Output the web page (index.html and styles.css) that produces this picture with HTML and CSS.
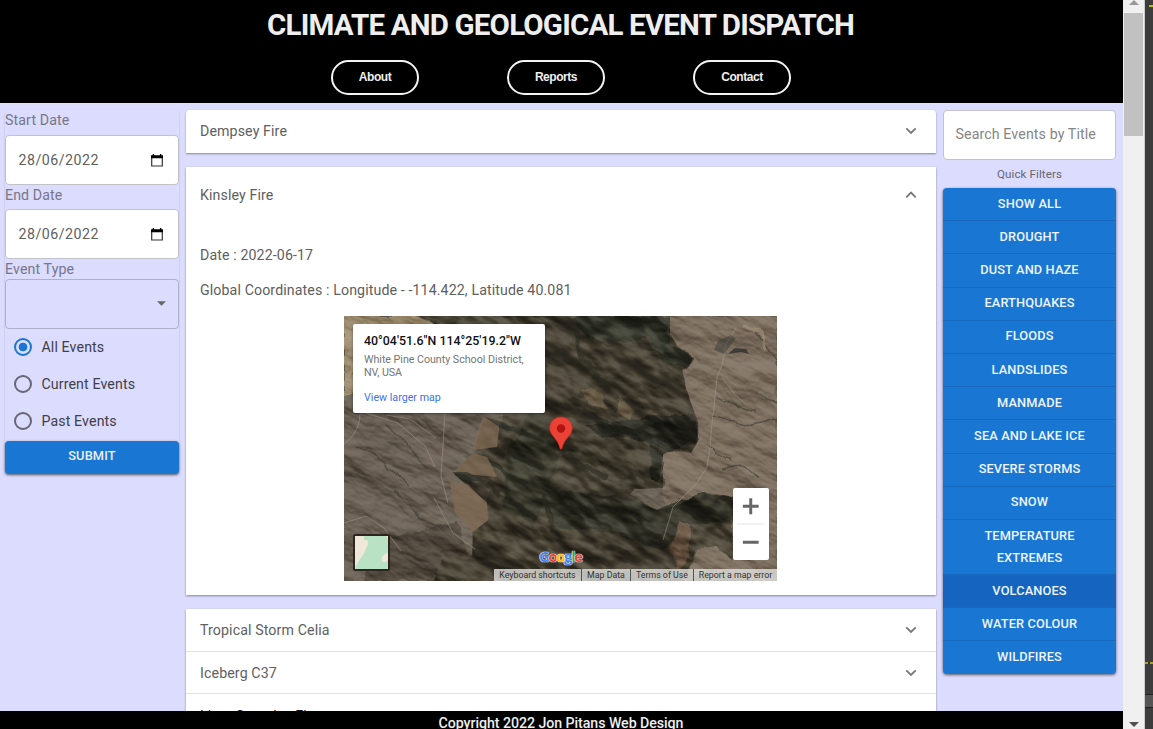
FILE: index.html
```html
<!DOCTYPE html>
<html lang="en">
<head>
<meta charset="utf-8">
<title>Climate and Geological Event Dispatch</title>
<link rel="stylesheet" href="styles.css">
</head>
<body>
<div class="screen">
  <div class="app">
    <header class="header">
      <h1 class="title">CLIMATE AND GEOLOGICAL EVENT DISPATCH</h1>
      <nav class="nav">
        <a class="nav-link">About</a>
        <a class="nav-link nav-reports">Reports</a>
        <a class="nav-link nav-contact">Contact</a>
      </nav>
    </header>
    <main class="main">
      <form class="search-form">
        <label class="label">Start Date</label>
        <div class="field date"><span>28/06/2022</span><svg class="calendar" viewBox="0 0 12 13"><path d="M.7 2.5h10.6v9.500H.7z" fill="none" stroke="#333" stroke-width="1.200"/><path d="M0 1.200h12v3H0zM1.700 0h1.400v2H1.700zM8.900 0h1.400v2H8.900z"/></svg></div>
        <label class="label">End Date</label>
        <div class="field date"><span>28/06/2022</span><svg class="calendar" viewBox="0 0 12 13"><path d="M.7 2.5h10.6v9.500H.7z" fill="none" stroke="#333" stroke-width="1.200"/><path d="M0 1.200h12v3H0zM1.700 0h1.400v2H1.700zM8.900 0h1.400v2H8.900z"/></svg></div>
        <label class="label label-type">Event Type</label>
        <div class="field select"><svg class="arrow" viewBox="0 0 8 4"><path d="M0 0h8L4 4z"/></svg></div>
        <div class="radio"><i class="dot checked"></i><span>All Events</span></div>
        <div class="radio"><i class="dot"></i><span>Current Events</span></div>
        <div class="radio"><i class="dot"></i><span>Past Events</span></div>
        <button type="button" class="submit">SUBMIT</button>
      </form>
      <section class="events">
        <article class="card first"><span>Dempsey Fire</span><svg class="chevron" viewBox="0 0 12 8"><path d="M1.3 1.3 6 6l4.700-4.700"/></svg></article>
        <article class="card open">
          <div class="open-head"><span>Kinsley Fire</span><svg class="chevron" viewBox="0 0 12 8"><path d="M1.300 6.300 6 1.600l4.700 4.700"/></svg></div>
          <p class="detail">Date : 2022-06-17</p>
          <p class="detail coords">Global Coordinates : Longitude - -114.422, Latitude 40.081</p>
          <div class="map">
            <svg class="terrain" viewBox="0 0 433 265">
              <defs>
                <filter id="plain" x="0" y="0" width="100%" height="100%" color-interpolation-filters="sRGB">
                  <feTurbulence type="fractalNoise" baseFrequency=".018 .04" numOctaves="5" seed="8"/>
                  <feDiffuseLighting lighting-color="#fff" surfaceScale="6" diffuseConstant=".62"><feDistantLight azimuth="240" elevation="52"/></feDiffuseLighting>
                </filter>
                <filter id="ridges" x="0" y="0" width="100%" height="100%" color-interpolation-filters="sRGB">
                  <feTurbulence type="fractalNoise" baseFrequency=".022 .038" numOctaves="3" seed="21"/>
                  <feDiffuseLighting lighting-color="#fff" surfaceScale="18" diffuseConstant=".7"><feDistantLight azimuth="250" elevation="46"/></feDiffuseLighting>
                  <feGaussianBlur stdDeviation=".8"/>
                </filter>
                <filter id="soft" x="-10%" y="-10%" width="120%" height="120%"><feTurbulence type="fractalNoise" baseFrequency=".06" numOctaves="3" seed="4"/><feDisplacementMap in="SourceGraphic" scale="8" xChannelSelector="R" yChannelSelector="G"/><feGaussianBlur stdDeviation=".7"/></filter>
                <clipPath id="hills"><path d="M72 0H326L324 14 333 29 349 42 345 51 338 54 342 72 348 90 354 106 353 127 347 137 326 135 319 138 319 172 290 173 286 178 300 187 313 194 332 190 346 183 360 176 389 181 389 244 372 230 352 234 340 265H90L100 238 128 240 129 216 144 204 143 187 110 158 129 136 140 103 160 100 195 92 201 60 160 40 140 30z"/></clipPath>
              </defs>
              <rect width="433" height="265" fill="#6e6559"/>
              <path d="M0 0H80L115 30 105 48 0 80z" fill="#a09175" filter="url(#soft)"/>
              <path d="M0 90 50 84 130 105 95 200 50 265H0z" fill="#6b6156"/>
              <path d="M318 0H433V265H340L318 180z" fill="#7e7162" filter="url(#soft)"/>
              <path d="M30 225 114 205 130 265H20z" fill="#554d42" filter="url(#soft)"/>
              <g filter="url(#soft)">
                <path d="M72 0H326L324 14 333 29 349 42 345 51 338 54 342 72 348 90 354 106 353 127 347 137 326 135 319 138 319 172 290 173 286 178 300 187 313 194 332 190 346 183 360 176 389 181 389 244 372 230 352 234 340 265H90L100 238 128 240 129 216 144 204 143 187 150 160 129 136 156 106 160 100 150 80 140 30z" fill="#5a5345"/>
                <path d="M228 0H326V28L349 42 342 52 318 46 306 22 280 28 240 20z" fill="#3d3f35"/>
                <path d="M310 100 350 98 354 127 325 135 300 124 260 120 240 110zM306 128 319 138 315 166 307 163z" fill="#34362d"/>
                <path d="M196 172 240 176 285 182 313 194 360 176 389 181 389 205 340 210 320 235 260 215 210 210z" fill="#3d3d32"/>
                <path d="M190 90 220 115 210 160 190 210 160 190 165 130z" fill="#454539"/>
                <path d="M336 206 347 210 344 235 335 255 326 235z" fill="#8b705d"/>
                <path d="M275 82 290 92 286 104 272 96zM240 72 258 78 262 94 244 88z" fill="#80705a"/>
              </g>
              <g style="mix-blend-mode:soft-light"><rect x="-150" y="-250" width="750" height="750" filter="url(#plain)" transform="rotate(28 216 132)"/></g>
              <g clip-path="url(#hills)" style="mix-blend-mode:hard-light" opacity=".46"><rect x="-150" y="-250" width="750" height="750" filter="url(#ridges)" transform="rotate(34 216 132)"/></g>
              <g clip-path="url(#hills)" style="mix-blend-mode:multiply"><path d="M0 0h433v265H0z" fill="#c4c2b5"/></g>
              <g fill="none" stroke="#20251f" stroke-width="5" stroke-linecap="round" opacity=".55" filter="url(#soft)">
                <path d="M160 108 175 117 192 121M160 134 178 142 198 152M150 148 165 160 182 167M160 185 175 190 190 201M232 14 236 40 254 58M250 60 262 68M238 94 252 104 262 107M262 113 290 116 312 104M220 130 238 150 262 162M146 168 155 178M200 180 208 215"/>
              </g>
              <g fill="#806b56" opacity=".75"><path d="m139 101 17 3-3 27-24 3 4-18zM129 137l14 4 10 20-44-4zM106 166l17 2 20 19 1 17-15 12-18-19z"/></g>
              <path d="m139 100 16 5 14 8-14-2zM108 156l12 8 24 2-21-10z" fill="#2b3029" opacity=".65"/>
              <g fill="none" stroke="#aa9c87" stroke-width="1" opacity=".5">
                <path d="M16 98C16 112 8 122 0 128M101 97 99 130 97 160 104 187M22 97 54 107 81 130 91 151M42 99 66 103 92 122M0 207 22 200 40 212 57 235M90 182 109 217 131 233M392 12 382 28 378 49 373 61 370 91 368 107 366 132 363 151 353 167 329 191 319 224M378 61 391 79 402 88"/>
              </g>
              <g fill="none" stroke="#383a30" stroke-width="1.500" opacity=".6" filter="url(#soft)"><path d="M373 81 396 92 412 96M370 100 400 109 433 103M412 16 425 35 433 50M413 76 424 84 433 87M366 129 378 141 388 145M377 152 395 148 415 160M13 130 38 145 65 170M42 110 65 130 83 154M50 175 75 200 100 215M290 150 303 169 306 163"/></g>
              <g fill="none" stroke="#b09c82" stroke-width="3" opacity=".5" filter="url(#soft)"><path d="M400 10C416 10 424 20 419 34M0 15 12 34 7 55 0 65"/></g>
              <path d="m384 38 7-6 11 1 3 5-8-2z" fill="#2d302d" opacity=".8"/>
              <path d="m370 34 4-9 13-6 5 3-12 16z" fill="#40413a" opacity=".55"/>
            </svg>
            <div class="map-info">
              <div class="map-title">40°04'51.6"N 114°25'19.2"W</div>
              <div class="map-address">White Pine County School District,<br>NV, USA</div>
              <a class="map-link">View larger map</a>
            </div>
            <svg class="pin" viewBox="0 0 24 34"><path d="M12 1C5.700 1 .7 5.800.7 12c0 8 8 10 10.200 20.200.3 1.400 1.900 1.400 2.200 0C15.300 22 23.300 20 23.300 12 23.300 5.800 18.300 1 12 1z" fill="#ea4335" stroke="#c5271d" stroke-width=".7"/><circle cx="12" cy="12.500" r="4.200" fill="#b31412"/></svg>
            <svg class="layer" viewBox="0 0 33 33"><path d="M0 0h33v33H0z" fill="#efe8d8"/><path d="M9 0h22l2 3v14c-5 1-7 5-6 8 1 2 4 1 6-1v9H0c2-8 7-10 10-18 2-5 5-8 2-11L9 4z" fill="#b9e2c5"/></svg>
            <div class="google"><b class="g-blue">G</b><b class="g-red">o</b><b class="g-yellow">o</b><b class="g-blue">g</b><b class="g-green">l</b><b class="g-red">e</b></div>
            <svg class="zoom" viewBox="0 0 36 72"><path d="M4 36h28" stroke="#e6e6e6"/><path d="M10 18h16M18 10v16M10 54.500h16" stroke="#666" stroke-width="3"/></svg>
            <div class="map-bar"><span class="bar-a">Keyboard shortcuts</span><span class="bar-b">Map Data</span><span class="bar-c">Terms of Use</span><span class="bar-d">Report a map error</span></div>
          </div>
        </article>
        <div class="list">
          <article class="row"><span>Tropical Storm Celia</span><svg class="chevron" viewBox="0 0 12 8"><path d="M1.300 1.300 6 6l4.700-4.700"/></svg></article>
          <article class="row second"><span>Iceberg C37</span><svg class="chevron" viewBox="0 0 12 8"><path d="M1.300 1.300 6 6l4.700-4.700"/></svg></article>
          <article class="row dark"><span>Lime Complex Fire</span></article>
        </div>
      </section>
      <aside class="filters">
        <div class="field search">Search Events by Title</div>
        <div class="caption">Quick Filters</div>
        <div class="filter-group">
          <div class="filter">SHOW ALL</div><div class="filter">DROUGHT</div><div class="filter">DUST AND HAZE</div><div class="filter">EARTHQUAKES</div><div class="filter">FLOODS</div><div class="filter">LANDSLIDES</div><div class="filter">MANMADE</div><div class="filter">SEA AND LAKE ICE</div><div class="filter">SEVERE STORMS</div><div class="filter">SNOW</div><div class="filter tall">TEMPERATURE<br>EXTREMES</div><div class="filter active">VOLCANOES</div><div class="filter">WATER COLOUR</div><div class="filter">WILDFIRES</div>
        </div>
      </aside>
    </main>
    <footer class="footer">Copyright 2022 Jon Pitans Web Design</footer>
  </div>
  <div class="scrollbar"><svg class="scroll-arrow" viewBox="0 0 10 5"><path d="M0 5h10L5 0z" fill="#999"/></svg><div class="thumb"></div><svg class="scroll-arrow down" viewBox="0 0 10 5"><path d="M0 0h10L5 5z" fill="#505050"/></svg></div>
  <div class="edge"><i class="mark top"></i><i class="mark"></i><i class="notch"></i></div>
</div>
</body>
</html>
```
FILE: styles.css
```css
* { box-sizing: border-box; }
body { margin: 0; font-family: Roboto, sans-serif; font-size: 14.2px; letter-spacing: .11px; color: #606060; overflow: hidden; }
.screen { display: flex; width: 1153px; height: 729px; }
.app { width: 1123px; display: flex; flex-direction: column; background: #dcdcfe; overflow: hidden; }
.header { flex: none; height: 103px; background: #000; color: #eee; }
.title { margin: 0; padding: 7px 2px 0 0; height: 59.500px; line-height: 36px; text-align: center; font-size: 29.500px; font-weight: 700; letter-spacing: -.820px; }
.nav { display: flex; padding-left: 331px; gap: 88px; }
.nav-link { width: 88px; height: 35px; border: 2px solid #f4f4f4; border-radius: 18px; font: 700 12px/31px "Liberation Sans", sans-serif; letter-spacing: -.45px; text-align: center; color: #eee; }
.nav-reports, .nav-contact { width: 98px; }
.main { flex: 1; min-height: 0; overflow: hidden; display: flex; align-items: flex-start; gap: 7px; padding: 7px 7px 0 5px; }
.search-form { width: 174px; flex: none; border-radius: 4px; box-shadow: 0 1px 2px rgba(0,0,0,.18); }
.label { display: block; height: 25px; line-height: 21px; color: #77778a; }
.label + .field { height: 50px; }
.field + .label { height: 24.400px; line-height: 20px; }
.field + .label-type { height: 19.600px; }
.field { border: 1px solid #c2c2cb; border-radius: 4px; background: #fff; }
.date { display: flex; align-items: center; justify-content: space-between; padding: 0 15px 0 12.500px; letter-spacing: .5px; }
.calendar { width: 12px; height: 13px; }
.select { display: flex; align-items: center; justify-content: flex-end; padding-right: 12px; background: transparent; border-color: #b0b0cc; }
.arrow { width: 9px; height: 5px; fill: #666; }
.radio { display: flex; align-items: center; gap: 9.500px; height: 37.200px; padding: 0 0 1px 9px; color: #404048; }
.dot { width: 18px; height: 18px; border: 2px solid #666674; border-radius: 50%; }
.dot.checked { border-color: #1976d2; background: radial-gradient(circle, #1976d2 0 4px, transparent 4.700px); }
.submit { display: block; width: 100%; height: 33px; border: 0; padding: 0 0 3px; border-radius: 4px; background: #1976d2; color: #eee; font: 500 12.800px Roboto, sans-serif; letter-spacing: .15px; box-shadow: 0 1px 3px rgba(0,0,0,.5); }
.events { width: 750px; flex: none; }
.card, .list { background: #fff; box-shadow: 0 1px 2px rgba(0,0,0,.4); }
.card { margin-bottom: 14px; }
.first, .row, .open-head { display: flex; align-items: center; justify-content: space-between; padding: 0 19px 0 14px; }
.first { height: 43px; padding-bottom: 1px; border-radius: 4px 4px 0 0; }
.chevron { width: 12px; height: 8px; fill: none; stroke: #777; stroke-width: 1.800; }
.open { height: 428px; }
.open-head { height: 56px; }
.detail { margin: 0; padding: 23px 14px 0; height: 46px; line-height: 18px; }
.coords { padding-top: 12px; height: 47px; }
.map { position: relative; width: 433px; height: 265px; margin: 0 0 0 158px; overflow: hidden; letter-spacing: 0; }
.terrain { display: block; width: 433px; height: 265px; isolation: isolate; }
.map-info { position: absolute; left: 9px; top: 8px; width: 192px; height: 89px; padding: 8px 11px; background: #fff; border-radius: 2px; box-shadow: 0 1px 3px rgba(0,0,0,.4); }
.map-title { color: #111; font-size: 12.400px; font-weight: 500; line-height: 17px; white-space: nowrap; }
.map-address { margin-top: 5px; color: #757575; font-size: 10.700px; line-height: 12.500px; white-space: nowrap; letter-spacing: -.03px; }
.map-link { display: block; margin-top: 12px; color: #4272e5; font-size: 10.700px; line-height: 14px; }
.pin { position: absolute; left: 205px; top: 100px; width: 24px; height: 34px; }
.layer { position: absolute; left: 9px; top: 218px; width: 37px; height: 37px; border: 2px solid #2d251f; border-radius: 2px; }
.google { position: absolute; left: 195px; top: 230px; display: flex; font: 15px/20px "Open Sans", sans-serif; letter-spacing: -1.450px; text-shadow: 0 0 1px #fff, 0 0 1px #fff, 0 0 1px #fff; }
.google b { font-weight: 700; }
.g-blue { color: #4285f4; }
.g-red { color: #ea4335; }
.g-yellow { color: #fbbc05; }
.g-green { color: #34a853; }
.zoom { position: absolute; left: 389px; top: 172px; width: 35.500px; height: 72px; background: #fff; border-radius: 2px; }
.map-bar { position: absolute; right: 0; bottom: 0; display: flex; height: 12px; background: rgba(225,225,222,.8); color: #333; font-size: 8.800px; line-height: 12px; text-align: center; white-space: nowrap; }
.map-bar span + span { border-left: 1px solid #555; }
.bar-a { width: 87px; }
.bar-b { width: 49px; }
.bar-c { width: 63px; }
.bar-d { width: 84px; }
.row { height: 42.500px; border-bottom: 1px solid #e2e2e2; }
.second { padding-top: 1px; }
.dark { padding-top: 3px; color: #111; }
.filters { width: 173px; flex: none; }
.search { height: 50px; padding-left: 11.500px; line-height: 47px; color: #858585; letter-spacing: .11px; white-space: nowrap; }
.caption { height: 28px; line-height: 29px; text-align: center; color: #666672; font-size: 11.600px; letter-spacing: .1px; }
.filter-group { border-radius: 4px; overflow: hidden; background: #1976d2; color: #eef4fc; font-size: 12.800px; font-weight: 500; letter-spacing: .12px; text-align: center; box-shadow: 0 1px 3px rgba(0,0,0,.6); }
.filter { height: 33.200px; padding-top: 4.700px; line-height: 22px; border-bottom: 1px solid #1767bd; }
.filter:last-child { border: 0; }
.tall { height: 55px; }
.active { background: #1565c0; }
.footer { flex: none; height: 18px; background: #000; color: #eee; text-align: center; font-size: 14.200px; line-height: 24px; font-weight: 500; letter-spacing: -.06px; padding-right: 1px; }
.scrollbar { width: 22px; background: #f0f0f0; display: flex; flex-direction: column; align-items: center; border-right: 1px solid #ccc; }
.scroll-arrow { width: 10px; height: 5px; flex: none; }
.thumb { width: 19px; height: 123px; margin-top: 8px; background: #c1c1c1; }
.down { margin-top: auto; margin-bottom: 2px; }
.edge { flex: 1; background: #3c3c3c; display: flex; flex-direction: column; align-items: flex-end; }
.mark { width: 8px; height: 2px; background: linear-gradient(90deg, #aaa522 3px, #333 3px 5px, #aaa522 5px); }
.top { width: 4px; margin-top: 5px; background: #c6bf00; }
.mark:nth-child(2) { margin-top: 655px; }
.notch { width: 8px; height: 14px; margin-top: 30px; background: #555; border: solid #222; border-width: 1px 0; }
```
